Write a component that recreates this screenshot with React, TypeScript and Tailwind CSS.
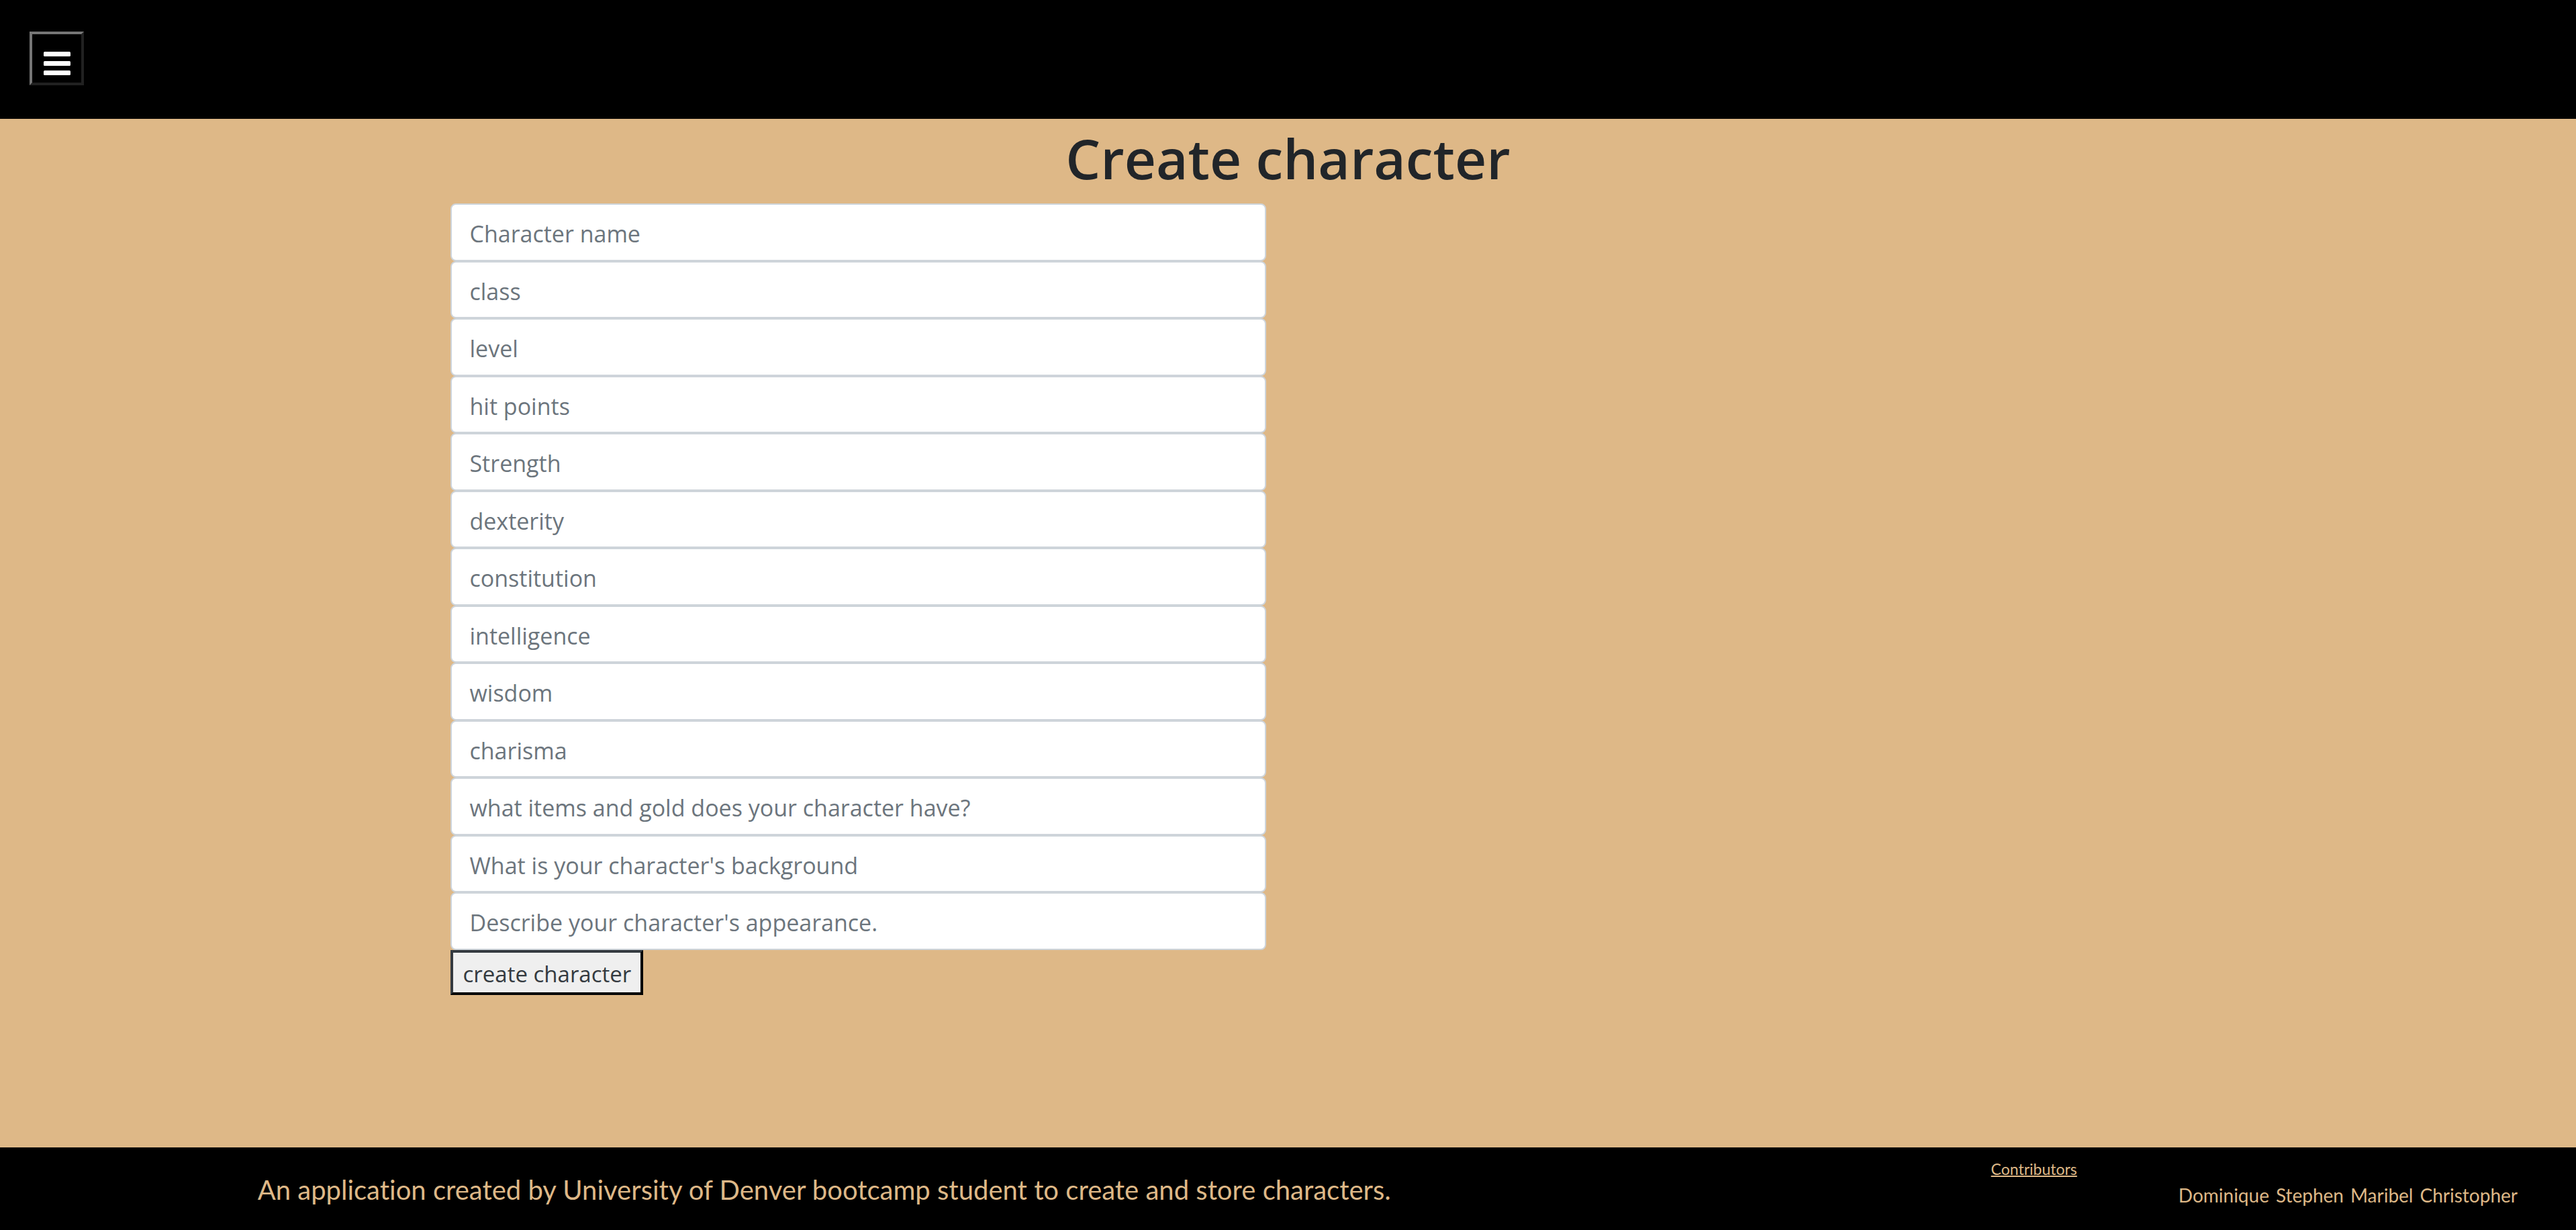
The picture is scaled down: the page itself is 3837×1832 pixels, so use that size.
const fields = [
  'Character name',
  'class',
  'level',
  'hit points',
  'Strength',
  'dexterity',
  'constitution',
  'intelligence',
  'wisdom',
  'charisma',
  'what items and gold does your character have?',
  "What is your character's background",
  "Describe your character's appearance.",
];

const contributors = ['Dominique', 'Stephen', 'Maribel', 'Christopher'];

function MenuIcon() {
  return (
    <svg viewBox="0 0 40 36" className="mt-4 h-9 w-10" fill="currentColor" aria-hidden="true">
      <rect y="0" width="40" height="7" rx="1.5" />
      <rect y="14" width="40" height="7" rx="1.5" />
      <rect y="28" width="40" height="7" rx="1.5" />
    </svg>
  );
}

export default function App() {
  return (
    <div className="flex min-h-screen flex-col bg-[#deb887] font-['Open_Sans',sans-serif] text-[#212529]">
      <header className="flex h-[177px] items-center bg-black px-11">
        <button
          type="button"
          aria-label="Menu"
          className="mb-1 flex h-20 w-[81px] items-center justify-center border-4 border-t-[#767676] border-r-[#212121] border-b-[#212121] border-l-[#767676] text-white"
        >
          <MenuIcon />
        </button>
      </header>

      <main className="flex-1">
        <h1 className="mb-3.5 pt-1 text-center text-[82px] leading-[108px] font-semibold">Create character</h1>
        <form className="mx-auto w-[65%]">
          <div className="w-1/2 pr-8">
            {fields.map((field) => (
              <input
                key={field}
                type="text"
                aria-label={field}
                placeholder={field}
                className="block h-[85px] w-full rounded-lg border-2 border-[#ced4da] bg-white px-[26px] pt-1 text-[34px] odd:h-[86px] placeholder:text-[#6c757d]"
              />
            ))}
          </div>
          <button
            type="submit"
            className="border-4 border-t-[#343a40] border-r-black border-b-black border-l-[#343a40] bg-[#efefef] px-3.5 pt-1 text-[33px] leading-[55px] text-[#343a40]"
          >
            create character
          </button>
        </form>
      </main>

      <footer className="flex h-[123px] justify-between bg-black pr-[87px] pl-[10%] font-[Papyrus,Lato,sans-serif] text-[#deb887] [font-variant-ligatures:none]">
        <p className="mt-[38px] text-[40px] leading-[50px]">
          An application created by University of Denver bootcamp student to create and store characters.
        </p>
        <div className="flex gap-[151px]">
          <h2 className="mt-4 text-[23px] leading-8 underline decoration-2">Contributors</h2>
          <ul className="mt-[51px] flex gap-2.5 text-[28px] leading-10">
            {contributors.map((name) => (
              <li key={name}>{name}</li>
            ))}
          </ul>
        </div>
      </footer>
    </div>
  );
}
